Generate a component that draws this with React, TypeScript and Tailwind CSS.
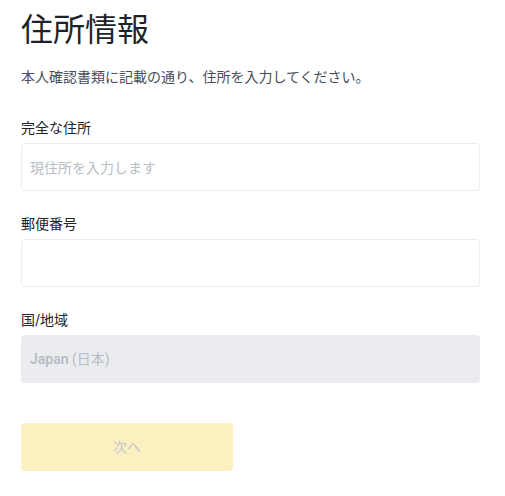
export default function App() {
  return (
    <div
      className="min-h-screen bg-white pl-[21px] pt-[10px] text-[#1e2329]"
      style={{ fontFamily: 'Inter, "Noto Sans CJK JP", sans-serif' }}
    >
      <h1 className="text-[32px] leading-10 font-normal">住所情報</h1>
      <p className="mt-[17px] text-sm leading-5 text-[#474d57]">
        本人確認書類に記載の通り、住所を入力してください。
      </p>

      <div className="mt-[31px] flex w-[459px] flex-col gap-[23px]">
        <div>
          <label className="mb-[5px] block text-sm leading-5">完全な住所</label>
          <input
            className="h-12 w-full rounded border border-[#eaecef] px-2 text-sm outline-none placeholder:text-[#b7bdc6]"
            placeholder="現住所を入力します"
          />
        </div>
        <div>
          <label className="mb-[5px] block text-sm leading-5">郵便番号</label>
          <input className="h-12 w-full rounded border border-[#eaecef] px-2 text-sm outline-none" />
        </div>
        <div>
          <label className="mb-[5px] block text-sm leading-5">国/地域</label>
          <div className="flex h-12 w-full items-center whitespace-pre rounded bg-[#eaecef] px-[9px] font-['Roboto','Noto_Sans_CJK_JP',sans-serif] text-sm text-[#b7bdc6]">
            <span className="font-semibold">Japan </span>
            <span className="font-normal">(日本)</span>
          </div>
        </div>
      </div>

      <button
        disabled
        className="mt-10 h-12 w-[212px] rounded bg-[#fdf0c0] text-sm text-[#c3c6cb]"
      >
        次へ
      </button>
    </div>
  );
}
